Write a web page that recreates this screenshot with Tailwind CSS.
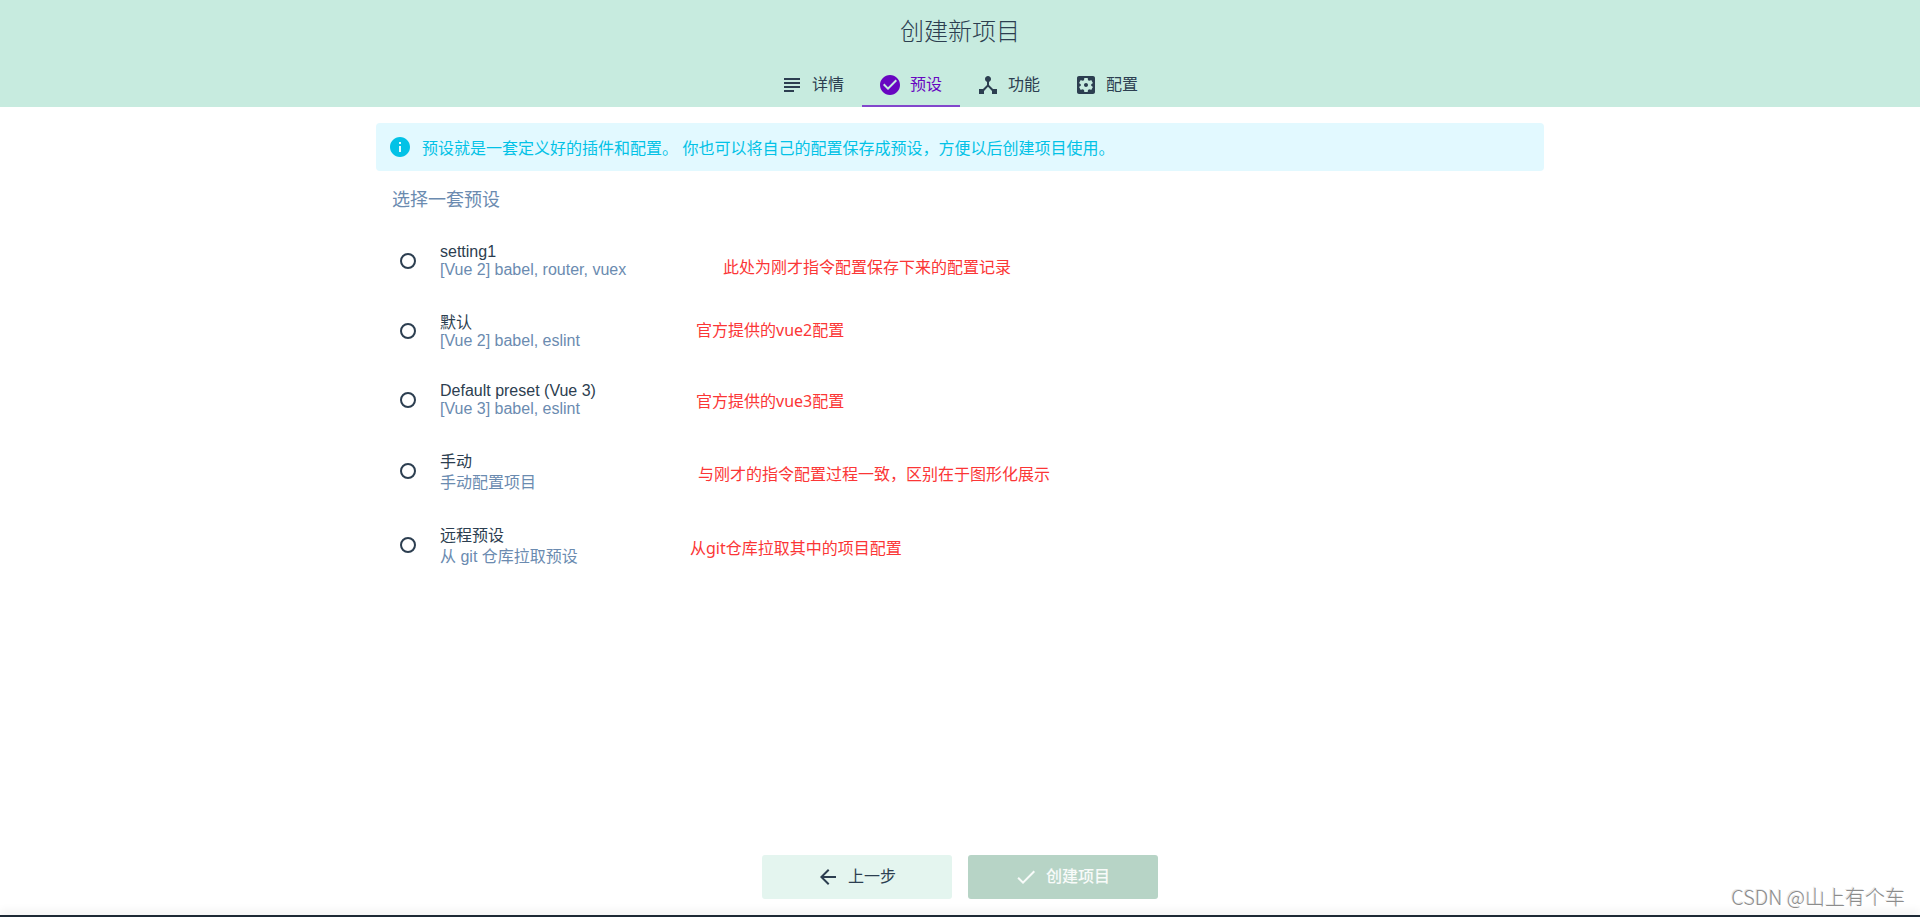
<!DOCTYPE html>
<html lang="zh-CN">
<head>
<meta charset="utf-8">
<title>创建新项目</title>
<script src="https://cdn.jsdelivr.net/npm/@tailwindcss/browser@4"></script>
</head>
<body class="flex min-h-screen flex-col bg-white font-['Liberation_Sans','Noto_Sans_CJK_SC',sans-serif] text-base text-[#2c3e50]">
  <header class="flex flex-col items-center bg-[#c7ebdf]">
    <h1 class="flex h-[63px] items-center text-2xl font-light">创建新项目</h1>
    <nav class="flex h-11" role="tablist">
      <button role="tab" class="flex items-center gap-2 border-b-2 border-transparent pt-0.5 pr-[18px] pl-4">
        <svg class="size-6" viewBox="0 0 24 24" fill="currentColor"><path d="M14 17H4v2h10v-2zm6-8H4v2h16V9zM4 15h16v-2H4v2zM4 5v2h16V5H4z"/></svg>详情
      </button>
      <button role="tab" aria-selected="true" class="flex items-center gap-2 border-b-2 border-[#8247cc] pt-0.5 pr-[18px] pl-4 text-[#6806c1]">
        <svg class="size-6" viewBox="0 0 24 24" fill="currentColor"><path d="M12 2C6.48 2 2 6.48 2 12s4.48 10 10 10 10-4.48 10-10S17.52 2 12 2zm-2 15l-5-5 1.410-1.410L10 14.170l7.590-7.590L19 8l-9 9z"/></svg>预设
      </button>
      <button role="tab" class="flex items-center gap-2 border-b-2 border-transparent pt-0.5 pr-[18px] pl-4">
        <svg class="size-6" viewBox="0 0 24 24" fill="currentColor"><path d="M17 16l-4-4V8.820C14.160 8.400 15 7.300 15 6c0-1.660-1.340-3-3-3S9 4.340 9 6c0 1.300.840 2.400 2 2.820V12l-4 4H3v5h5v-3.050l4-4.200 4 4.200V21h5v-5h-4z"/></svg>功能
      </button>
      <button role="tab" class="flex items-center gap-2 border-b-2 border-transparent pt-0.5 pr-[18px] pl-4">
        <svg class="size-6" viewBox="0 0 24 24" fill="currentColor"><path d="M12 10c-1.100 0-2 .900-2 2s.900 2 2 2 2-.900 2-2-.900-2-2-2zm7-7H5c-1.110 0-2 .900-2 2v14c0 1.100.890 2 2 2h14c1.110 0 2-.900 2-2V5c0-1.100-.890-2-2-2zm-1.750 9c0 .230-.020.460-.050.680l1.480 1.160c.130.110.170.300.080.450l-1.400 2.420c-.090.150-.270.210-.430.150l-1.740-.700c-.360.280-.760.510-1.180.690l-.260 1.850c-.030.170-.180.300-.350.300h-2.800c-.170 0-.320-.130-.350-.290l-.260-1.850c-.430-.180-.820-.410-1.180-.690l-1.740.700c-.160.060-.340 0-.430-.150l-1.400-2.420c-.090-.150-.050-.340.080-.450l1.480-1.160c-.030-.230-.050-.460-.050-.690s.020-.460.050-.680l-1.480-1.160c-.130-.110-.170-.300-.080-.450l1.400-2.420c.090-.150.270-.210.430-.150l1.740.700c.360-.280.760-.510 1.180-.690l.260-1.850c.030-.170.180-.300.350-.300h2.800c.170 0 .320.130.350.290l.260 1.850c.430.180.820.410 1.180.690l1.740-.700c.160-.060.340 0 .430.150l1.400 2.420c.090.150.050.340-.080.450l-1.480 1.160c.030.230.050.460.050.690z"/></svg>配置
      </button>
    </nav>
  </header>

  <main class="mx-auto w-full max-w-[1200px] grow px-4 pt-4">
    <div class="flex min-h-12 items-center gap-[10px] rounded bg-[#e2f9ff] px-3 text-[#03c2e6]">
      <svg class="size-6 shrink-0" viewBox="0 0 24 24" fill="currentColor"><path d="M12 2C6.480 2 2 6.480 2 12s4.480 10 10 10 10-4.480 10-10S17.520 2 12 2zm1 15h-2v-6h2v6zm0-8h-2V7h2v2z"/></svg>
      <p class="pt-1">预设就是一套定义好的插件和配置。 你也可以将自己的配置保存成预设，方便以后创建项目使用。</p>
    </div>
    <h2 class="flex h-14 items-center px-4 pt-0.5 text-lg text-[#6b8bb0]">选择一套预设</h2>

    <div role="radiogroup" aria-label="选择一套预设">
      <div class="relative">
        <label class="flex items-center gap-6 px-6 py-4">
          <input type="radio" name="preset" class="size-4 appearance-none rounded-full border-2 border-[#2c3e50]">
          <span><span class="block leading-[18px]">setting1</span><span class="block leading-[18px] text-[#6b8bb0]">[Vue 2] babel, router, vuex</span></span>
        </label>
        <p class="absolute top-7 left-[347px] font-['Noto_Sans','Noto_Sans_CJK_SC',sans-serif] text-[#fb3636]">此处为刚才指令配置保存下来的配置记录</p>
      </div>
      <div class="relative">
        <label class="flex items-center gap-6 px-6 py-4">
          <input type="radio" name="preset" class="size-4 appearance-none rounded-full border-2 border-[#2c3e50]">
          <span><span class="block pt-0.5 leading-[19px]">默认</span><span class="block leading-[18px] text-[#6b8bb0]">[Vue 2] babel, eslint</span></span>
        </label>
        <p class="absolute top-[23px] left-80 font-['Noto_Sans','Noto_Sans_CJK_SC',sans-serif] text-[#fb3636]">官方提供的vue2配置</p>
      </div>
      <div class="relative">
        <label class="flex items-center gap-6 px-6 py-4">
          <input type="radio" name="preset" class="size-4 appearance-none rounded-full border-2 border-[#2c3e50]">
          <span><span class="block leading-[18px]">Default preset (Vue 3)</span><span class="block leading-[18px] text-[#6b8bb0]">[Vue 3] babel, eslint</span></span>
        </label>
        <p class="absolute top-[23px] left-80 font-['Noto_Sans','Noto_Sans_CJK_SC',sans-serif] text-[#fb3636]">官方提供的vue3配置</p>
      </div>
      <div class="relative">
        <label class="flex items-center gap-6 px-6 py-4">
          <input type="radio" name="preset" class="size-4 appearance-none rounded-full border-2 border-[#2c3e50]">
          <span><span class="block pt-0.5 leading-[19px]">手动</span><span class="block pt-0.5 leading-[19px] text-[#6b8bb0]">手动配置项目</span></span>
        </label>
        <p class="absolute top-7 left-[322px] font-['Noto_Sans','Noto_Sans_CJK_SC',sans-serif] text-[#fb3636]">与刚才的指令配置过程一致，区别在于图形化展示</p>
      </div>
      <div class="relative">
        <label class="flex items-center gap-6 px-6 py-4">
          <input type="radio" name="preset" class="size-4 appearance-none rounded-full border-2 border-[#2c3e50]">
          <span><span class="block pt-0.5 leading-[19px]">远程预设</span><span class="block pt-0.5 leading-[19px] text-[#6b8bb0]">从 git 仓库拉取预设</span></span>
        </label>
        <p class="absolute top-7 left-[314px] font-['Noto_Sans','Noto_Sans_CJK_SC',sans-serif] text-[#fb3636]">从git仓库拉取其中的项目配置</p>
      </div>
    </div>
  </main>

  <div class="flex justify-center gap-4 pb-4">
    <button class="flex h-11 w-[190px] items-center justify-center gap-2 rounded-[3px] bg-[#e4f5ef] pr-0.5">
      <svg class="size-6" viewBox="0 0 24 24" fill="currentColor"><path d="M20 11H7.830l5.590-5.590L12 4l-8 8 8 8 1.410-1.410L7.830 13H20v-2z"/></svg>上一步
    </button>
    <button disabled class="flex h-11 w-[190px] items-center justify-center gap-2 rounded-[3px] bg-[#b7d4c6] pr-0.5 font-medium text-white/90">
      <svg class="size-6" viewBox="0 0 24 24" fill="currentColor"><path d="M9 16.170L4.830 12l-1.420 1.410L9 19 21 7l-1.410-1.410z"/></svg>创建项目
    </button>
  </div>

  <footer class="h-0.5 bg-[#1d2935] shadow-[0_-2px_10px_rgba(0,0,0,0.2)]"></footer>
  <p class="absolute right-[15px] bottom-1.5 font-['Noto_Sans_CJK_SC',sans-serif] text-xl font-light text-[#8c8c8c] [text-shadow:-1px_-1px_0_#e6e6e6]">CSDN @山上有个车</p>
</body>
</html>
